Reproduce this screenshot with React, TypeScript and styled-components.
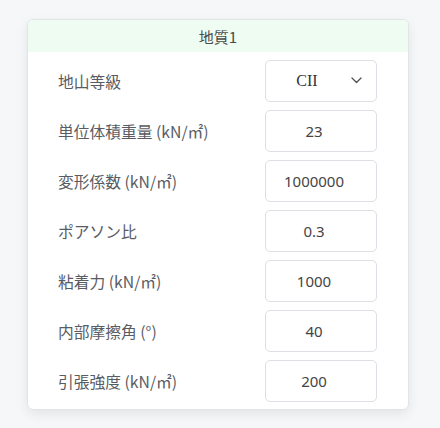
import React from "react";
import styled, { createGlobalStyle } from "styled-components";

const Global = createGlobalStyle`
  html, body { margin: 0; padding: 0; background: #f6f7f9; }
  body { font-family: "Noto Sans CJK JP", "Noto Sans", sans-serif; }
`;

const Page = styled.div`
  width: 440px;
  height: 428px;
  padding: 19px 31px 0 27px;
  box-sizing: border-box;
`;

const Card = styled.div`
  width: 382px;
  background: #fff;
  border: 1px solid #e2e4e8;
  border-radius: 6px;
  box-shadow: 0 4px 12px rgba(0, 0, 0, 0.08);
  overflow: hidden;
  box-sizing: border-box;
`;

const Header = styled.div`
  height: 32px;
  background: #effcf1;
  display: flex;
  align-items: center;
  justify-content: center;
  font-size: 15px;
  color: #4a4a4a;
  font-family: "Noto Sans CJK JP", "Noto Sans", sans-serif;
`;

const Body = styled.div`
  display: flex;
  flex-direction: column;
  gap: 8px;
  padding: 8px 31px 7px 30px;
`;

const Row = styled.div`
  display: flex;
  align-items: center;
  justify-content: space-between;
  height: 42px;
`;

const Label = styled.span`
  font-size: 15.75px;
  color: #595c63;
  font-family: "Noto Sans CJK JP", sans-serif;
`;

const Field = styled.div`
  width: 112px;
  height: 42px;
  box-sizing: border-box;
  border: 1px solid #dcdfe4;
  border-radius: 5px;
  padding-right: 14px;
  display: flex;
  align-items: center;
  justify-content: center;
  position: relative;
  font-size: 15px;
  color: #444;
  font-family: "Noto Sans", sans-serif;
`;

const SelectValue = styled.span`
  font-family: "Liberation Serif", serif;
  font-size: 16px;
  color: #333;
  margin-right: 14px;
`;

const Chevron = styled.svg`
  position: absolute;
  right: 14px;
  top: 50%;
  margin-top: -4px;
`;

const rows: { label: string; value: string }[] = [
  { label: "単位体積重量 (kN/㎡)", value: "23" },
  { label: "変形係数 (kN/㎡)", value: "1000000" },
  { label: "ポアソン比", value: "0.3" },
  { label: "粘着力 (kN/㎡)", value: "1000" },
  { label: "内部摩擦角 (°)", value: "40" },
  { label: "引張強度 (kN/㎡)", value: "200" },
];

export default function App() {
  return (
    <>
      <Global />
      <Page>
        <Card>
          <Header>地質1</Header>
          <Body>
            <Row>
              <Label>地山等級</Label>
              <Field>
                <SelectValue>CII</SelectValue>
                <Chevron width="11" height="7" viewBox="0 0 11 7">
                  <path d="M1 1l4.5 4.5L10 1" fill="none" stroke="#555" strokeWidth="1.4" strokeLinecap="round" strokeLinejoin="round" />
                </Chevron>
              </Field>
            </Row>
            {rows.map((r) => (
              <Row key={r.label}>
                <Label>{r.label}</Label>
                <Field>{r.value}</Field>
              </Row>
            ))}
          </Body>
        </Card>
      </Page>
    </>
  );
}
